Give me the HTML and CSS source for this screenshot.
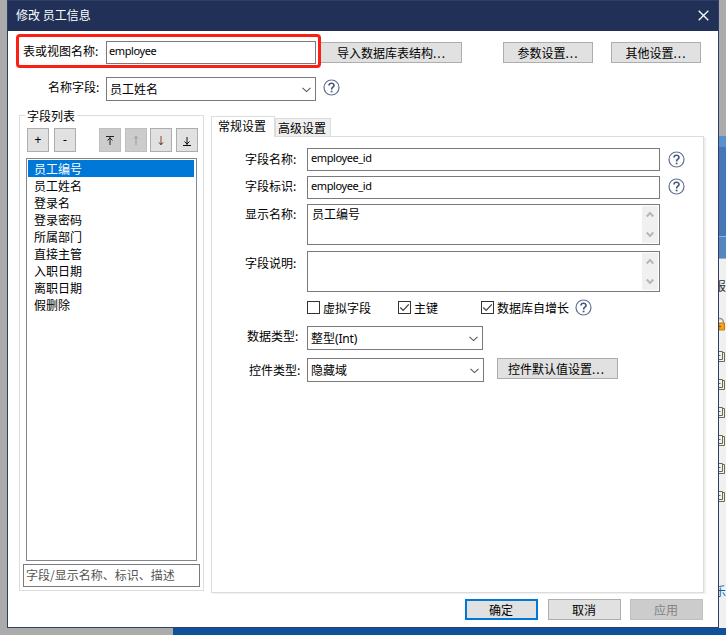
FILE: index.html
```html
<!DOCTYPE html>
<html lang="zh-CN">
<head>
<meta charset="utf-8">
<title>修改 员工信息</title>
<link rel="stylesheet" href="styles.css">
</head>
<body>
<svg width="0" height="0" class="defs">
  <symbol id="help" viewBox="0 0 17 17"><circle cx="8.5" cy="8.5" r="7.5" fill="none" stroke="#62728f" stroke-width="1.2"/><path d="M6 6.5C6.100 3.500 11 3.600 11 6.400C11 8.200 8.600 8.300 8.600 10.400" fill="none" stroke="#43557a" stroke-width="1.6"/><path d="M7.700 11.700h1.800v1.600h-1.800z" fill="#43557a"/></symbol>
  <symbol id="chev" viewBox="0 0 9 6"><path d="M.5 .8L4.500 4.600L8.500 .8" fill="none" stroke="#555" stroke-width="1.100"/></symbol>
  <symbol id="up" viewBox="0 0 8 7"><path d="M.7 5.500L4 2L7.300 5.500" fill="none" stroke="#b8b8b8" stroke-width="2"/></symbol>
  <symbol id="down" viewBox="0 0 8 7"><path d="M.7 1.500L4 5L7.300 1.500" fill="none" stroke="#b8b8b8" stroke-width="2"/></symbol>
  <symbol id="tick" viewBox="0 0 11 11"><path d="M1.300 5.500L4.200 8.400L9.800 2.400" fill="none" stroke="#444" stroke-width="1.300"/></symbol>
  <symbol id="copy" viewBox="0 0 7 12"><path d="M0 1.500H3.500V9.500H0M3.500 2.500H5.500V11.500H0M0 5.500H1.500" fill="none" stroke="#6b6a4c"/></symbol>
</svg>
<div class="desktop">
  <main class="dialog">
    <header class="title"><span>修改 员工信息</span><svg width="11" height="11" viewBox="0 0 11 11"><path d="M.7 .7L10.300 10.300M10.300 .7L.7 10.300" stroke="#fff" stroke-width="1.300"/></svg></header>
    <div class="top">
      <div class="marked"><label>表或视图名称:</label><div class="input latin">employee</div></div>
      <button class="btn import">导入数据库表结构<i>...</i></button>
      <button class="btn small">参数设置<i>...</i></button>
      <button class="btn small">其他设置<i>...</i></button>
    </div>
    <div class="namerow"><label>名称字段:</label><div class="select wide"><span>员工姓名</span><svg><use href="#chev"/></svg></div><svg class="help"><use href="#help"/></svg></div>
    <div class="columns">
      <section class="group">
        <h2>字段列表</h2>
        <div class="tools">
          <button>+</button><button>-</button><span class="space"></span>
          <button class="off"><svg width="8" height="9" viewBox="0 0 8 9"><path d="M0 .5H8M4 1V9M1.500 4.500L4 2L6.500 4.500" stroke="#222" fill="none"/></svg></button>
          <button class="off"><svg width="8" height="11" viewBox="0 0 8 11"><path d="M4 1V10M2 3.500L4 1.500L6 3.500" stroke="#999" fill="none"/></svg></button>
          <button class="near"><svg width="8" height="11" viewBox="0 0 8 11"><path d="M4 1V10" stroke="#a33f35" fill="none"/><path d="M2 7.500L4 9.500L6 7.500" stroke="#222" fill="none"/></svg></button>
          <button><svg class="low" width="8" height="9" viewBox="0 0 8 9"><path d="M0 8.500H8M4 0V8M1.500 4.500L4 7L6.500 4.500" stroke="#111" fill="none"/></svg></button>
        </div>
        <ul class="list"><li class="sel">员工编号</li><li>员工姓名</li><li>登录名</li><li>登录密码</li><li>所属部门</li><li>直接主管</li><li>入职日期</li><li>离职日期</li><li>假删除</li></ul>
        <div class="search">字段/显示名称、标识、描述</div>
      </section>
      <section class="tabs">
        <nav><div class="tab active">常规设置</div><div class="tab">高级设置</div></nav>
        <div class="panel">
          <div class="row"><label>字段名称:</label><div class="input latin">employee_id</div><svg class="help"><use href="#help"/></svg></div>
          <div class="row second"><label>字段标识:</label><div class="input latin">employee_id</div><svg class="help"><use href="#help"/></svg></div>
          <div class="row third"><label>显示名称:</label><div class="area"><span>员工编号</span><div class="scroll"><svg><use href="#up"/></svg><svg><use href="#down"/></svg></div></div></div>
          <div class="row fourth"><label>字段说明:</label><div class="area"><span></span><div class="scroll"><svg><use href="#up"/></svg><svg><use href="#down"/></svg></div></div></div>
          <div class="checks">
            <div class="check c1"><b></b>虚拟字段</div>
            <div class="check c2"><b><svg><use href="#tick"/></svg></b>主键</div>
            <div class="check"><b><svg><use href="#tick"/></svg></b>数据库自增长</div>
            <svg class="help"><use href="#help"/></svg>
          </div>
          <div class="row data"><label>数据类型:</label><div class="select"><span>整型<em class="latin">(Int)</em></span><svg><use href="#chev"/></svg></div></div>
          <div class="row control"><label>控件类型:</label><div class="select"><span>隐藏域</span><svg><use href="#chev"/></svg></div><button class="btn defaults">控件默认值设置<i>...</i></button></div>
        </div>
      </section>
    </div>
    <footer><button class="btn ok">确定</button><button class="btn">取消</button><button class="btn disabled">应用</button></footer>
  </main>
  <aside class="behind">
    <div class="blue"></div>
    <div class="peek">报</div>
    <svg class="lock" width="7" height="15" viewBox="0 0 7 15"><path d="M0 1.500C3 1 4.500 3 4.500 6" fill="none" stroke="#999" stroke-width="1.500"/><path d="M0 6H5.500V13H0z" fill="#f5a313" stroke="#c97a08"/><path d="M0 9.500H2" stroke="#8a4d00"/></svg>
    <div class="copies"><svg><use href="#copy"/></svg><svg><use href="#copy"/></svg><svg><use href="#copy"/></svg><svg><use href="#copy"/></svg><svg><use href="#copy"/></svg><svg><use href="#copy"/></svg></div>
    <div class="peek link">乐</div>
  </aside>
  <div class="taskbar"></div>
</div>
</body>
</html>
```
FILE: styles.css
```css
* { box-sizing: border-box; margin: 0; padding: 0; }
body { font: 12px/16px "Noto Sans CJK SC", sans-serif; color: #000; overflow: hidden; }
i, em { font-style: normal; }
.defs { display: block; height: 0; }
.desktop { width: 726px; height: 635px; background: #ababab; display: grid; grid-template: 628px 7px / 7px 712px 7px; }
.dialog { grid-column: 2; background: #fff; border: 1px solid #303e67; display: flex; flex-direction: column; overflow: hidden; }
.title { height: 30px; flex: none; background: #203056; color: #fff; display: flex; align-items: center; justify-content: space-between; padding: 0 9px 2px 8px; }
.title svg { margin-top: 1px; }
.latin { font-family: "Noto Sans", sans-serif; font-size: 11px; letter-spacing: -.4px; }
em.latin { font-size: 12px; letter-spacing: -.2px; }
.btn { height: 21px; border: 1px solid #adadad; background: #e1e1e1; font: inherit; line-height: 19px; color: #000; white-space: nowrap; text-align: center; }
.btn i { letter-spacing: 1px; }
.top { height: 38px; flex: none; display: flex; padding: 3px 0 0 8px; }
.top > * { flex: none; }
.marked { width: 305px; height: 34px; border: 3px solid #fb1f14; border-radius: 4px; display: flex; padding: 4px 0 0 4px; z-index: 1; background: #fff; }
.marked label { width: 83px; padding-top: 2px; }
.input { border: 1px solid #7a7a7a; background: #fff; height: 23px; padding-left: 3px; line-height: 18px; }
.marked .input { width: 210px; padding-left: 2px; }
.import { width: 146px; margin: 8px 41px 0 -5px; padding-left: 5px; }
.small { width: 90px; margin: 8px 18px 0 0; }
.namerow { height: 46px; flex: none; display: flex; padding: 8px 0 0 40px; }
.namerow label { width: 58px; padding-top: 2px; }
.select { width: 176px; height: 24px; border: 1px solid #7a7a7a; display: flex; align-items: center; justify-content: space-between; padding: 0 4px 0 3px; line-height: 22px; }
.select svg { width: 9px; height: 6px; margin-top: 1px; }
.wide { width: 210px; }
.help { width: 17px; height: 17px; flex: none; }
.namerow .help { margin: 2px 0 0 7px; }
.columns { display: flex; padding-left: 11px; height: 478px; flex: none; }
.group { width: 185px; height: 476px; border: 1px solid #dcdcdc; padding: 0 3px; margin-right: 7px; }
.group h2 { font: inherit; width: 52px; height: 16px; margin: -8px 0 0 2px; padding-left: 2px; background: #fff; }
.tools { display: flex; height: 24px; gap: 4px; margin: 4px 0 6px 4px; }
.tools button { width: 22px; height: 24px; border: 1px solid #adadad; background: #e1e1e1; display: grid; place-items: center; font: 12px/20px "Noto Sans", sans-serif; }
.tools button:first-child { margin-right: 1px; }
.tools .near { margin-left: -1px; }
.tools .low { margin-top: 3px; }
.tools .space { width: 15px; }
.tools .off { background: #ccc; border-color: #bfbfbf; }
.list { list-style: none; width: 171px; height: 403px; margin-left: 3px; border: 1px solid #828790; padding: 1px 2px 0 1px; line-height: 17px; }
.list li { height: 17px; padding-left: 6px; }
.list .sel { background: #0078d7; color: #fff; }
.search { width: 177px; height: 23px; margin-top: 3px; border: 1px solid #7a7a7a; padding-left: 2px; line-height: 20px; color: #555; }
.tabs { width: 495px; }
.tabs nav { display: flex; align-items: flex-end; height: 21px; margin-top: 1px; }
.tab { position: relative; z-index: 1; height: 19px; width: 56px; border: 1px solid #dcdcdc; background: #f0f0f0; padding-left: 2px; line-height: 18px; }
.tab.active { width: 64px; height: 21px; background: #fff; border-bottom: 0; padding-left: 6px; line-height: 18px; }
.panel { height: 457px; margin-top: -1px; width: 493px; border: 1px solid #dcdcdc; box-shadow: 2px 1px 0 #f0f0f0; padding: 11px 0 0 33px; }
.row { display: flex; height: 28px; }
.row label { width: 62px; padding-top: 3px; }
.row .input { width: 353px; }
.row .help { margin: 3px 0 0 8px; }
.row.second .help { margin-top: 2px; }
.second label { padding-top: 2px; }
.third { height: 47px; }
.third label { padding-top: 2px; }
.fourth { height: 50px; }
.fourth label { padding-top: 4px; }
.area { width: 353px; height: 41px; border: 1px solid #7a7a7a; display: flex; justify-content: space-between; padding: 1px 1px 1px 4px; line-height: 16px; }
.scroll { width: 16px; background: #f0f0f0; display: flex; flex-direction: column; align-items: center; justify-content: space-between; padding: 5px 0 5px; }
.scroll svg { width: 8px; height: 7px; }
.checks { display: flex; align-items: flex-start; height: 25px; padding-left: 62px; line-height: 13px; }
.check { display: flex; gap: 3px; white-space: nowrap; }
.check b { width: 13px; height: 13px; border: 1px solid #333; }
.check svg { width: 11px; height: 11px; display: block; }
.c1 { width: 91px; }
.c2 { width: 83px; }
.checks .help { margin: -2px 0 0 6px; }
.data { height: 32px; }
.data label { padding: 2px 0 0 2px; }
.control label { padding: 4px 0 0 4px; }
.control .select { width: 177px; }
.defaults { width: 121px; margin-left: 13px; padding-right: 2px; }
footer { display: flex; gap: 10px; padding: 6px 0 0 457px; }
footer .btn { width: 73px; padding-right: 1px; }
footer .ok { border: 2px solid #0078d7; line-height: 17px; }
footer .disabled { background: #ccc; border-color: #bfbfbf; color: #838383; margin-left: -1px; }
.behind { grid-column: 3; background: #f0f0f0; overflow: hidden; border-top: 136px solid #ababab; }
.blue { height: 123px; background: linear-gradient(#5b8fd0 0 11px, #4678b5 11px 100px, #8bb4e8 100px 101px, #5585bd 101px 122px, #8bb4e8 122px); }
.peek { margin: 19px 0 0 -5px; width: 12px; color: #333; }
.lock { display: block; margin-top: 23px; }
.copies { display: flex; flex-direction: column; gap: 16px; margin-top: 18px; height: 233px; }
.copies svg { width: 7px; height: 12px; flex: none; }
.link { color: #10609f; margin-top: 0; }
.taskbar { grid-column: 1 / -1; background: #10529a; border-left: 173px solid #ababab; }
```
